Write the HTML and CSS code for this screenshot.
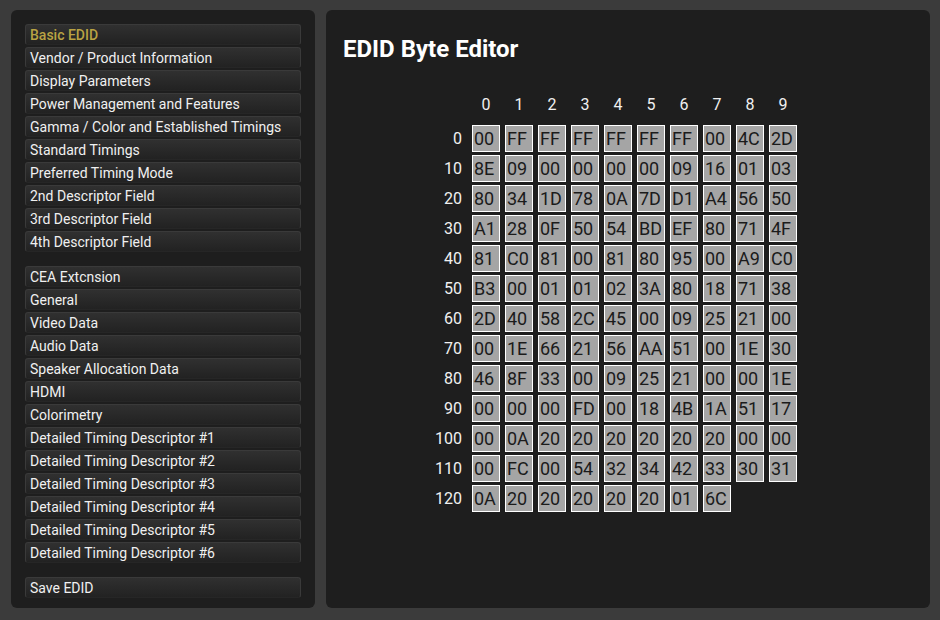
FILE: index.html
```html
<!DOCTYPE html>
<html>
<head>
<meta charset="utf-8">
<link rel="stylesheet" href="styles.css">
</head>
<body>
<div class="app">
  <nav class="side">
    <div class="group">
      <div class="btn active">Basic EDID</div>
      <div class="btn">Vendor / Product Information</div>
      <div class="btn">Display Parameters</div>
      <div class="btn">Power Management and Features</div>
      <div class="btn">Gamma / Color and Established Timings</div>
      <div class="btn">Standard Timings</div>
      <div class="btn">Preferred Timing Mode</div>
      <div class="btn">2nd Descriptor Field</div>
      <div class="btn">3rd Descriptor Field</div>
      <div class="btn">4th Descriptor Field</div>
    </div>
    <div class="group">
      <div class="btn">CEA Extcnsion</div>
      <div class="btn">General</div>
      <div class="btn">Video Data</div>
      <div class="btn">Audio Data</div>
      <div class="btn">Speaker Allocation Data</div>
      <div class="btn">HDMI</div>
      <div class="btn">Colorimetry</div>
      <div class="btn">Detailed Timing Descriptor #1</div>
      <div class="btn">Detailed Timing Descriptor #2</div>
      <div class="btn">Detailed Timing Descriptor #3</div>
      <div class="btn">Detailed Timing Descriptor #4</div>
      <div class="btn">Detailed Timing Descriptor #5</div>
      <div class="btn">Detailed Timing Descriptor #6</div>
    </div>
    <div class="group">
      <div class="btn">Save EDID</div>
    </div>
  </nav>
  <main class="main">
    <h1 class="title">EDID Byte Editor</h1>
    <div class="grid" id="grid"></div>
  </main>
</div>
<script>
var bytes = "00 FF FF FF FF FF FF 00 4C 2D 8E 09 00 00 00 00 09 16 01 03 80 34 1D 78 0A 7D D1 A4 56 50 A1 28 0F 50 54 BD EF 80 71 4F 81 C0 81 00 81 80 95 00 A9 C0 B3 00 01 01 02 3A 80 18 71 38 2D 40 58 2C 45 00 09 25 21 00 00 1E 66 21 56 AA 51 00 1E 30 46 8F 33 00 09 25 21 00 00 1E 00 00 00 FD 00 18 4B 1A 51 17 00 0A 20 20 20 20 20 20 00 00 00 FC 00 54 32 34 42 33 30 31 0A 20 20 20 20 20 01 6C".split(" ");
var g = document.getElementById("grid");
var h = '<div class="lbl"></div>';
for (var c = 0; c < 10; c++) h += '<div class="hd">' + c + '</div>';
for (var r = 0; r < 13; r++) {
  h += '<div class="lbl">' + (r * 10) + '</div>';
  for (var c = 0; c < 10; c++) {
    var i = r * 10 + c;
    if (i < bytes.length) h += '<div class="cell">' + bytes[i] + '</div>';
    else h += '<div class="empty"></div>';
  }
}
g.innerHTML = h;
</script>
</body>
</html>
```
FILE: styles.css
```css
html, body {
  margin: 0;
  padding: 0;
  background: #3b3b3b;
  width: 940px;
  height: 620px;
  overflow: hidden;
  font-family: Roboto, "Liberation Sans", sans-serif;
}
.app {
  display: flex;
  gap: 11px;
  padding: 10px 10px 12px 11px;
  height: 598px;
}
.side {
  width: 276px;
  flex: none;
  background: #1e1e1e;
  border-radius: 6px;
  padding: 14px 14px 0 14px;
  display: flex;
  flex-direction: column;
  gap: 14px;
}
.group {
  display: flex;
  flex-direction: column;
  gap: 2px;
}
.btn {
  height: 21px;
  box-sizing: border-box;
  border: 1px solid #3a3a3a;
  border-bottom-color: #262626;
  border-radius: 3px;
  background: linear-gradient(#303030, #222222);
  color: #f0f0f0;
  font-size: 14px;
  line-height: 20px;
  padding-left: 4px;
  white-space: nowrap;
}
.btn.active {
  color: #b9a343;
  font-weight: 500;
}
.main {
  flex: 1;
  background: #1e1e1e;
  border-radius: 6px;
  padding: 24px 17px 0 17px;
}
.title {
  margin: 0;
  color: #ffffff;
  font-size: 24px;
  font-weight: 700;
  line-height: 30px;
}
.grid {
  margin: 31px 0 0 81px;
  display: grid;
  grid-template-columns: 43px repeat(10, 28px);
  grid-auto-rows: 27px;
  column-gap: 5px;
  row-gap: 3px;
}
.hd {
  color: #f0f0f0;
  font-size: 16px;
  text-align: center;
  line-height: 20px;
  align-self: start;
  margin-bottom: 4px;
}
.lbl {
  color: #f0f0f0;
  font-size: 16px;
  text-align: right;
  padding-right: 5px;
  line-height: 27px;
}
.cell {
  box-sizing: border-box;
  border: 1px solid #ffffff;
  background: #a5a5a5;
  color: #1b1b1b;
  font-size: 18px;
  line-height: 25px;
  padding-left: 1px;
  overflow: hidden;
}
```
